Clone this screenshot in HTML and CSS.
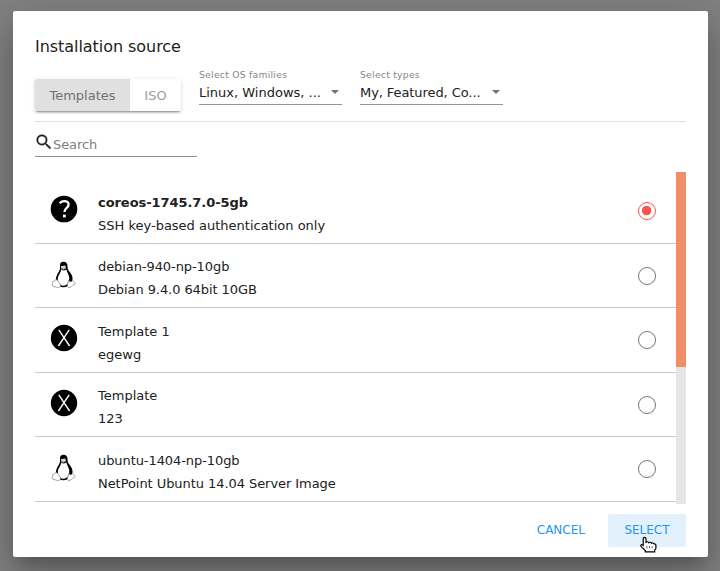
FILE: index.html
```html
<!DOCTYPE html>
<html lang="en">
<head>
<meta charset="utf-8">
<title>Installation source</title>
<link rel="stylesheet" href="styles.css">
</head>
<body>
<svg class="defs" width="0" height="0" aria-hidden="true">
  <symbol id="question" viewBox="0 0 28 28">
    <circle cx="14" cy="14" r="13.3"/>
    <path d="M9.6 8.2C11 6.7 12.6 6.1 14.3 6.1C17 6.1 18.6 7.5 18.6 9.5C18.6 13 14.4 12.6 14.4 17.1" fill="none" stroke="#fff" stroke-width="2.3"/>
    <path d="M13 19.6h2.8v2.8H13z" fill="#fff"/>
  </symbol>
  <symbol id="xmark" viewBox="0 0 28 28">
    <circle cx="14" cy="14" r="13.2"/>
    <path d="M8.8 5.9L19.6 22M19.2 5.9L8.4 22" fill="none" stroke="#fff" stroke-width="1.4"/>
  </symbol>
  <symbol id="tux" viewBox="0 0 28 28">
    <path d="M13.4.7C11 .7 9.9 2.3 10 4.7C10.2 8.2 9.8 9.2 8 12C6.3 15 5.5 17.3 6 20.3L9.4 25.5C12 26.5 15 26.5 17.4 25.3L22 20.5C23.4 17.4 22 13.6 19.7 11C17.4 8.2 17.7 7.3 17.5 4.6C17.3 2 16 .7 13.4.7Z"/>
    <path d="M11.3 8.2C12.5 10 14.5 10 16.2 8.2C16.8 11 19 13.4 19.2 16.6C19.5 20.5 18 24 14.2 24.7C10.8 25 8 22 7.8 18.4C7.7 14.7 10.8 12 11.3 8.2Z" fill="#fff"/>
    <path d="M11 5.2C11.4 4.4 12.3 4.5 12.7 5.3C13.6 4.2 15.2 4.3 15.7 5.5L15.9 7.2L13.2 8.8L11.2 7.4Z" fill="#ddd"/>
    <path d="M11.3 7L13.3 7.8L15.7 6.8" fill="none" stroke="#666" stroke-width=".6"/>
    <path d="M5.7 18.6C7.3 18.4 8.8 21 10.1 23.1C11.3 25.4 9.2 27.1 7.3 26.4L2.8 25.2C1.6 24.7 2.9 23.1 2.5 21.6C2.2 20.2 3.3 20.5 4.5 20.1Z" fill="#fff" stroke="#888" stroke-width=".8"/>
    <path d="M18.8 19.4C20 21.4 21.6 21 22.6 19.2C23.6 19.5 23.3 20.9 24.8 21.9C26.3 23 23.7 23.7 22.4 24.5C20.7 26.1 19.1 27.2 17.9 26.2C16.7 25 18.3 21.3 18.8 19.4Z" fill="#fff" stroke="#888" stroke-width=".8"/>
  </symbol>
</svg>
<main class="dialog">
  <h1 class="title">Installation source</h1>
  <header class="toolbar">
    <div class="toggle">
      <button class="toggle-item active">Templates</button>
      <button class="toggle-item">ISO</button>
    </div>
    <div class="select">
      <span class="select-label">Select OS families</span>
      <div class="select-value"><span>Linux, Windows, ...</span><i class="arrow"></i></div>
    </div>
    <div class="select">
      <span class="select-label">Select types</span>
      <div class="select-value"><span class="tight">My, Featured, Co...</span><i class="arrow"></i></div>
    </div>
  </header>
  <div class="search">
    <svg class="search-icon" viewBox="0 0 24 24"><path d="M15.5 14h-.79l-.28-.27A6.47 6.47 0 0 0 16 9.5 6.5 6.5 0 1 0 9.5 16c1.61 0 3.09-.59 4.23-1.57l.27.28v.79l5 4.99L20.49 19l-4.99-5zm-6 0A4.5 4.5 0 1 1 14 9.5 4.49 4.49 0 0 1 9.5 14z"/></svg>
    <span>Search</span>
  </div>
  <section class="list">
    <div class="rows">
      <div class="row selected">
        <svg class="os"><use href="#question"/></svg>
        <div class="text"><div class="name">coreos-1745.7.0-5gb</div><div>SSH key-based authentication only</div></div>
        <i class="radio"></i>
      </div>
      <div class="row">
        <svg class="os tux"><use href="#tux"/></svg>
        <div class="text tight"><div class="name">debian-940-np-10gb</div><div>Debian 9.4.0 64bit 10GB</div></div>
        <i class="radio"></i>
      </div>
      <div class="row">
        <svg class="os"><use href="#xmark"/></svg>
        <div class="text"><div class="name">Template 1</div><div>egewg</div></div>
        <i class="radio"></i>
      </div>
      <div class="row">
        <svg class="os"><use href="#xmark"/></svg>
        <div class="text"><div class="name">Template</div><div>123</div></div>
        <i class="radio"></i>
      </div>
      <div class="row">
        <svg class="os tux"><use href="#tux"/></svg>
        <div class="text"><div class="name tight">ubuntu-1404-np-10gb</div><div class="snug">NetPoint Ubuntu 14.04 Server Image</div></div>
        <i class="radio"></i>
      </div>
    </div>
    <div class="scrollbar"><div class="thumb"></div></div>
  </section>
  <footer class="actions">
    <button class="action">CANCEL</button>
    <button class="action focused">SELECT
      <svg class="cursor" viewBox="0 0 17 17"><path d="M4.5 1.3C5.7 1.3 6 2 6 3V6.2C7 5.4 8.4 5.7 8.7 6.7C9.7 5.9 11.1 6.2 11.5 7.2C12.5 6.6 13.5 7 14 7.9C15.3 7.5 15.9 8.3 15.9 9.5V12.5L14.7 14V15.9H5.3V14.6L1.4 10.9C.4 9.8.8 8.6 1.8 8.6C2.4 8.6 2.8 9 3.2 9.4V3C3.2 2 3.5 1.3 4.5 1.3Z" fill="#fff" stroke="#000" stroke-width="1.2"/><path d="M6.9 10v2.4M9.5 10v2.4M12.1 10v2.4" stroke="#555" stroke-width=".9"/></svg>
    </button>
  </footer>
</main>
</body>
</html>
```
FILE: styles.css
```css
* { box-sizing: border-box; }
body {
  margin: 0;
  height: 571px;
  padding: 11px 12px 14px 13px;
  overflow: hidden;
  background: #828282;
  font: 13px/23px "DejaVu Sans", sans-serif;
  color: #212121;
}
.defs { display: block; }
button { border: 0; margin: 0; background: none; font: inherit; }
.dialog {
  display: flex;
  flex-direction: column;
  height: 546px;
  padding: 22px 22px 0;
  background: #fff;
  border-radius: 2px;
  box-shadow: 0 11px 15px -7px rgba(0,0,0,.2), 0 24px 38px 3px rgba(0,0,0,.14), 0 9px 46px 8px rgba(0,0,0,.12);
}
.dialog > * { flex: none; }
.title { margin: 0; height: 27px; font-size: 16px; font-weight: 400; line-height: 27px; letter-spacing: -.05px; }
.toolbar {
  display: flex;
  height: 62px;
  border-bottom: 1px solid #dedede;
}
.toggle {
  display: flex;
  margin: 19px 18px 0 0;
  width: 146px;
  height: 32px;
  border-radius: 2px;
  overflow: hidden;
  flex: none;
  box-shadow: 0 3px 1px -2px rgba(0,0,0,.2), 0 2px 2px rgba(0,0,0,.14), 0 1px 5px rgba(0,0,0,.12);
}
.toggle-item { flex: 1; padding: 1px 0 0; line-height: 31px; color: #9e9e9e; }
.toggle-item.active { flex: 0 0 95px; background: #e0e0e0; color: #707070; }
.select { width: 143px; margin-right: 18px; padding-top: 8px; }
.select-label { display: block; height: 13px; font-size: 9.2px; line-height: 13px; letter-spacing: .28px; color: #858585; }
.select-value {
  display: flex;
  justify-content: space-between;
  height: 24px;
  padding-right: 3px;
  line-height: 23px;
  border-bottom: 1px solid #949494;
  white-space: nowrap;
}
.arrow { margin-top: 9px; height: 0; border: 4.5px solid transparent; border-top: 4px solid #757575; border-bottom: 0; }
.search {
  display: flex;
  width: 162px;
  height: 35px;
  border-bottom: 1px solid #949494;
  color: #808080;
  line-height: 45px;
  letter-spacing: -.1px;
}
.search-icon { width: 20px; height: 20px; margin: 10px -1px 0 -1px; fill: #212121; stroke: #212121; stroke-width: .25; }
.list { display: flex; height: 332px; margin-top: 15px; }
.rows { flex: 1; padding-top: 7.4px; }
.row { display: flex; height: 64.5px; border-bottom: 1px solid #c8c8c8; }
.os { width: 28px; height: 28px; margin: 15.7px 20px 0 15px; }
.tux { margin-top: 16.7px; height: 28px; }
.text { flex: 1; padding-top: 11.5px; }
.tight { letter-spacing: -.08px; }
.snug { letter-spacing: -.06px; }
.selected .name { font-weight: 700; letter-spacing: -.06px; }
.radio {
  width: 18px;
  height: 18px;
  margin: 23px 20px 0 0;
  border: 1px solid #757575;
  border-radius: 50%;
}
.selected .radio { border-color: #ff5252; background: radial-gradient(circle at 7.6px 7.6px, #ff5252 4.4px, transparent 5px); }
.scrollbar { width: 10px; background: #e5e5e5; }
.thumb { height: 195px; background: #f08e68; }
.actions { display: flex; justify-content: flex-end; margin-top: 10px; gap: 7px; }
.action { position: relative; height: 33px; padding: 0 16px; font-size: 12px; line-height: 31px; color: #2196f3; border-radius: 2px; }
.focused { width: 78px; background: #e3f1fd; }
.cursor { position: absolute; left: 32px; top: 22px; width: 17px; height: 17px; }
```
